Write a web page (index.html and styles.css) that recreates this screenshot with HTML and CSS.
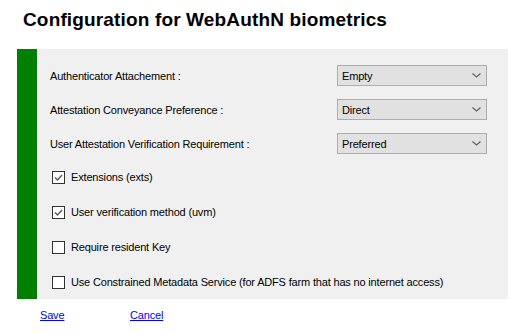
FILE: index.html
```html
<!DOCTYPE html>
<html lang="en">
<head>
  <meta charset="UTF-8">
  <title>Configuration for WebAuthN biometrics</title>
  <link rel="stylesheet" href="styles.css">
</head>
<body>
  <h1 class="title">Configuration for WebAuthN biometrics</h1>

  <div class="panel">
    <div class="panel-bar"></div>
    <div class="panel-body">
      <div class="field">
        <span class="field-label">Authenticator Attachement :</span>
        <div class="combo"><span>Empty</span><svg class="chevron" width="9" height="5" viewBox="0 0 9 5"><polyline points="0.5,0.5 4.5,4 8.5,0.5" fill="none" stroke="#606060" stroke-width="1.2"/></svg></div>
      </div>
      <div class="field">
        <span class="field-label">Attestation Conveyance Preference :</span>
        <div class="combo"><span>Direct</span><svg class="chevron" width="9" height="5" viewBox="0 0 9 5"><polyline points="0.5,0.5 4.5,4 8.5,0.5" fill="none" stroke="#606060" stroke-width="1.2"/></svg></div>
      </div>
      <div class="field">
        <span class="field-label">User Attestation Verification Requirement :</span>
        <div class="combo"><span>Preferred</span><svg class="chevron" width="9" height="5" viewBox="0 0 9 5"><polyline points="0.5,0.5 4.5,4 8.5,0.5" fill="none" stroke="#606060" stroke-width="1.2"/></svg></div>
      </div>

      <div class="checks">
        <label class="check">
          <span class="box checked"><svg width="11" height="11" viewBox="0 0 11 11"><polyline points="2,5.5 4.5,8 9,3" fill="none" stroke="#555" stroke-width="1.3"/></svg></span>
          Extensions (exts)
        </label>
        <label class="check">
          <span class="box checked"><svg width="11" height="11" viewBox="0 0 11 11"><polyline points="2,5.5 4.5,8 9,3" fill="none" stroke="#555" stroke-width="1.3"/></svg></span>
          User verification method (uvm)
        </label>
        <label class="check">
          <span class="box"></span>
          Require resident Key
        </label>
        <label class="check">
          <span class="box"></span>
          Use Constrained Metadata Service (for ADFS farm that has no internet access)
        </label>
      </div>
    </div>
  </div>

  <div class="actions">
    <a href="#" class="link">Save</a>
    <a href="#" class="link">Cancel</a>
  </div>
</body>
</html>
```

FILE: styles.css
```css
body {
  margin: 0;
  font-family: 'Liberation Sans', Arial, sans-serif;
  font-size: 11px;
  letter-spacing: -0.17px;
  color: #000;
  background-color: #fff;
}
.title {
  margin: 0;
  padding: 8px 0 0 23px;
  height: 49px;
  box-sizing: border-box;
  font-size: 19px;
  font-weight: 700;
  letter-spacing: 0.15px;
  line-height: 24px;
}
.panel {
  display: flex;
  margin: 0 1px 0 17px;
  height: 250px;
}
.panel-bar {
  width: 20px;
  background-color: #008000;
}
.panel-body {
  flex: 1;
  background-color: #f0f0f0;
  padding: 16px 0 0 13px;
}
.field {
  display: grid;
  grid-template-columns: 287px 150px;
  align-items: center;
  height: 21px;
  margin-bottom: 13px;
}
.combo {
  display: flex;
  align-items: center;
  justify-content: space-between;
  height: 21px;
  box-sizing: border-box;
  padding: 0 5px 0 4px;
  background-color: #e1e1e1;
  border: 1px solid #adadad;
}
.chevron {
  display: block;
}
.checks {
  display: flex;
  flex-direction: column;
  gap: 15px;
  margin-top: 2px;
  padding-left: 2px;
}
.check {
  display: flex;
  align-items: center;
  gap: 6px;
  height: 20px;
}
.box {
  width: 13px;
  height: 13px;
  box-sizing: border-box;
  border: 1px solid #333;
  background-color: #fff;
  display: flex;
  align-items: center;
  justify-content: center;
}
.actions {
  display: flex;
  padding: 10px 0 0 40px;
}
.link {
  color: #0000ff;
  text-decoration: underline;
  width: 90px;
}
```
